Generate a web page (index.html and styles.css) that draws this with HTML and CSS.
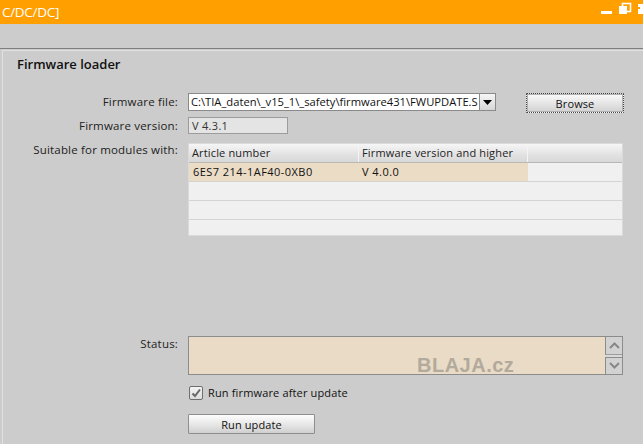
FILE: index.html
```html
<!DOCTYPE html>
<html>
<head>
<meta charset="utf-8">
<link rel="stylesheet" href="styles.css">
</head>
<body>
<div class="window">
  <div class="titlebar">
    <span class="title">C/DC/DC]</span>
    <svg class="winctl" width="45" height="24" viewBox="0 0 45 24">
      <rect x="3" y="11" width="11" height="3" fill="#fff"/>
      <rect x="24.5" y="3.5" width="8" height="8" fill="none" stroke="#fff" stroke-width="1.6"/>
      <rect x="21" y="6" width="8" height="8" fill="#fff"/>
      <rect x="40" y="4" width="5" height="10" fill="#fff"/>
      <rect x="40" y="7" width="2" height="2" fill="#ff9f00"/>
    </svg>
  </div>
  <div class="toolbar"></div>
  <div class="panel">
    <h1 class="heading">Firmware loader</h1>
    <div class="form">
      <div class="label">Firmware file:</div>
      <div class="field file-field">
        <div class="combo">
          <div class="combo-text">C:\TIA_daten\_v15_1\_safety\firmware431\FWUPDATE.S</div>
          <div class="combo-btn"><svg width="9" height="5" viewBox="0 0 9 5"><path d="M0 0H9L4.5 5Z" fill="#000"/></svg></div>
        </div>
        <button class="btn browse">Browse</button>
      </div>

      <div class="label label-version">Firmware version:</div>
      <div class="field"><div class="readonly">V 4.3.1</div></div>

      <div class="label label-modules">Suitable for modules with:</div>
      <div class="field">
        <div class="table">
          <div class="thead">
            <div class="th">Article number</div>
            <div class="th">Firmware version and higher</div>
            <div class="th"></div>
          </div>
          <div class="tr">
            <div class="td sel">6ES7 214-1AF40-0XB0</div>
            <div class="td sel">V 4.0.0</div>
            <div class="td"></div>
          </div>
          <div class="tr"><div class="td"></div><div class="td"></div><div class="td"></div></div>
          <div class="tr"><div class="td"></div><div class="td"></div><div class="td"></div></div>
          <div class="tr last"><div class="td"></div><div class="td"></div><div class="td"></div></div>
        </div>
      </div>

      <div class="label label-status">Status:</div>
      <div class="field status-field">
        <div class="status">
          <span class="watermark">BLAJA.cz</span>
        </div>
        <div class="scroll">
          <div class="sbtn"><svg width="11" height="7" viewBox="0 0 11 7"><path d="M1 6L5.5 1.5L10 6" fill="none" stroke="#888" stroke-width="2"/></svg></div>
          <div class="sbtn"><svg width="11" height="7" viewBox="0 0 11 7"><path d="M1 1L5.5 5.5L10 1" fill="none" stroke="#888" stroke-width="2"/></svg></div>
        </div>
      </div>

      <div class="label"></div>
      <div class="field check-field">
        <span class="checkbox"><svg width="12" height="12" viewBox="0 0 12 12"><path d="M2.5 6.5L5 9L10 2.5" fill="none" stroke="#666" stroke-width="2"/></svg></span>
        <span class="check-label">Run firmware after update</span>
      </div>

      <div class="label"></div>
      <div class="field run-field">
        <button class="btn run">Run update</button>
      </div>
    </div>
  </div>
</div>
</body>
</html>
```

FILE: styles.css
```css
html, body {
  margin: 0;
  padding: 0;
  width: 643px;
  height: 444px;
  overflow: hidden;
  background: #cccccc;
  font-family: "Open Sans", "Noto Sans", sans-serif;
  font-size: 11px;
  color: #1a1a1a;
}
.window {
  width: 643px;
  height: 444px;
  display: flex;
  flex-direction: column;
}
.titlebar {
  height: 24px;
  background: #ff9f00;
  display: flex;
  align-items: center;
  justify-content: space-between;
  flex: none;
}
.title {
  color: #fff;
  font-size: 13.5px;
  letter-spacing: -0.3px;
  padding-left: 2px;
  line-height: 24px;
}
.winctl {
  display: block;
  flex: none;
}
.toolbar {
  height: 24px;
  background: #cccccc;
  border-bottom: 1px solid #7f7f7f;
  flex: none;
}
.panel {
  margin-top: 1px;
  margin-left: 2px;
  border-top: 1px solid #e0e0e0;
  border-left: 1px solid #e0e0e0;
  flex: 1;
  padding-top: 5px;
}
.heading {
  margin: 0 0 0 14px;
  font-size: 13px;
  font-weight: 600;
  line-height: 16px;
  color: #111;
}
.form {
  margin-top: 21px;
  display: grid;
  grid-template-columns: 175px 1fr;
  column-gap: 10px;
}
.label {
  text-align: right;
  line-height: 18px;
  white-space: nowrap;
  color: #222;
  font-size: 11.5px;
  letter-spacing: 0.18px;
}
.label-version { margin-top: 4px; }
.label-modules { margin-top: 7px; line-height: 16px; }
.label-status { margin-top: 100px; line-height: 16px; }
.field { display: flex; }
.file-field { align-items: flex-start; height: 20px; }
.combo {
  display: flex;
  width: 308px;
  height: 18px;
  box-sizing: border-box;
}
.combo-text {
  width: 292px;
  box-sizing: border-box;
  border: 1px solid #8a8a8a;
  background: #fff;
  padding: 0 0 0 2px;
  line-height: 16px;
  white-space: nowrap;
  overflow: hidden;
  color: #111;
  font-size: 11.2px;
}
.combo-btn {
  width: 16px;
  box-sizing: border-box;
  border: 1px solid #8a8a8a;
  border-left: none;
  background: linear-gradient(#f6f6f6, #d6d6d6);
  display: flex;
  align-items: center;
  justify-content: center;
}
.combo-btn svg { display: block; }
.btn {
  font-family: inherit;
  font-size: 11px;
  color: #111;
  padding: 0;
  margin: 0;
  box-sizing: border-box;
  background: linear-gradient(#fbfbfb, #e6e6e6 50%, #d2d2d2);
  border: 1px solid #9a9a9a;
  border-radius: 1px;
  letter-spacing: 0.1px;
}
.browse {
  margin-left: 30px;
  width: 98px;
  height: 20px;
  border: 1px dotted #444;
  outline: 1px solid #b0b0b0;
  outline-offset: -2px;
}
.readonly {
  margin-top: 4px;
  width: 100px;
  height: 17px;
  box-sizing: border-box;
  border: 1px solid #9c9c9c;
  background: #e4e4e4;
  padding-left: 3px;
  line-height: 15px;
  color: #333;
  letter-spacing: 0.3px;
}
.table {
  margin-top: 8px;
  width: 435px;
  height: 93px;
  box-sizing: border-box;
  border: 1px solid #dadada;
  background: #f0f0f0;
}
.thead, .tr {
  display: grid;
  grid-template-columns: 170px 169px 1fr;
}
.thead {
  height: 19px;
  box-sizing: border-box;
  border-bottom: 1px solid #b8b8b8;
  background: linear-gradient(#f6f6f6, #e2e2e2 60%, #d8d8d8);
}
.th {
  padding-left: 3px;
  line-height: 17px;
  border-right: 1px solid #f4f4f4;
  color: #222;
  white-space: nowrap;
  letter-spacing: 0.15px;
}
.th:last-child { border-right: none; }
.tr {
  height: 19px;
  box-sizing: border-box;
  border-bottom: 1px solid #d4d4d4;
}
.tr.last { border-bottom: none; height: 15px; }
.td {
  padding-left: 4px;
  line-height: 18px;
  white-space: nowrap;
  color: #111;
  letter-spacing: 0.45px;
}
.td:nth-child(2) { padding-left: 3px; }
.td.sel { background: #ebdcc6; }
.status-field { margin-top: 100px; }
.status {
  position: relative;
  width: 417px;
  height: 39px;
  box-sizing: border-box;
  border: 1px solid #8c8c8c;
  border-right: none;
  background: #e9dbc5;
}
.watermark {
  position: absolute;
  left: 228px;
  top: 18px;
  font-family: "Liberation Sans", Arial, sans-serif;
  font-weight: bold;
  font-size: 20px;
  line-height: 20px;
  color: #b2aa9d;
  letter-spacing: 0.5px;
}
.scroll {
  display: flex;
  flex-direction: column;
  gap: 2px;
  width: 18px;
  height: 39px;
  box-sizing: border-box;
  border: 1px solid #8c8c8c;
  border-left: none;
  background: #dadada;
}
.sbtn {
  flex: 1;
  box-sizing: border-box;
  border-left: 1px solid #8c8c8c;
  border-bottom: 1px solid #8c8c8c;
  background: #d2d2d2;
  display: flex;
  align-items: center;
  justify-content: center;
}
.sbtn:first-child { border-bottom: 1px solid #9c9c9c; }
.sbtn:last-child { border-top: 1px solid #8c8c8c; border-bottom: none; }
.sbtn svg { display: block; }
.check-field {
  margin-top: 11px;
  align-items: center;
  height: 14px;
}
.checkbox {
  width: 14px;
  height: 14px;
  box-sizing: border-box;
  border: 1px solid #6e6e6e;
  border-radius: 2px;
  background: linear-gradient(#f4f4f4, #dcdcdc);
  display: flex;
  align-items: center;
  justify-content: center;
  margin-left: 1px;
}
.checkbox svg { display: block; }
.check-label {
  margin-left: 5px;
  line-height: 14px;
  color: #111;
  letter-spacing: 0.15px;
}
.run-field { margin-top: 14px; }
.run {
  width: 127px;
  height: 20px;
  border: 1px solid #8e8e8e;
  background: linear-gradient(#fdfdfd, #e8e8e8 50%, #cfcfcf);
}
```
